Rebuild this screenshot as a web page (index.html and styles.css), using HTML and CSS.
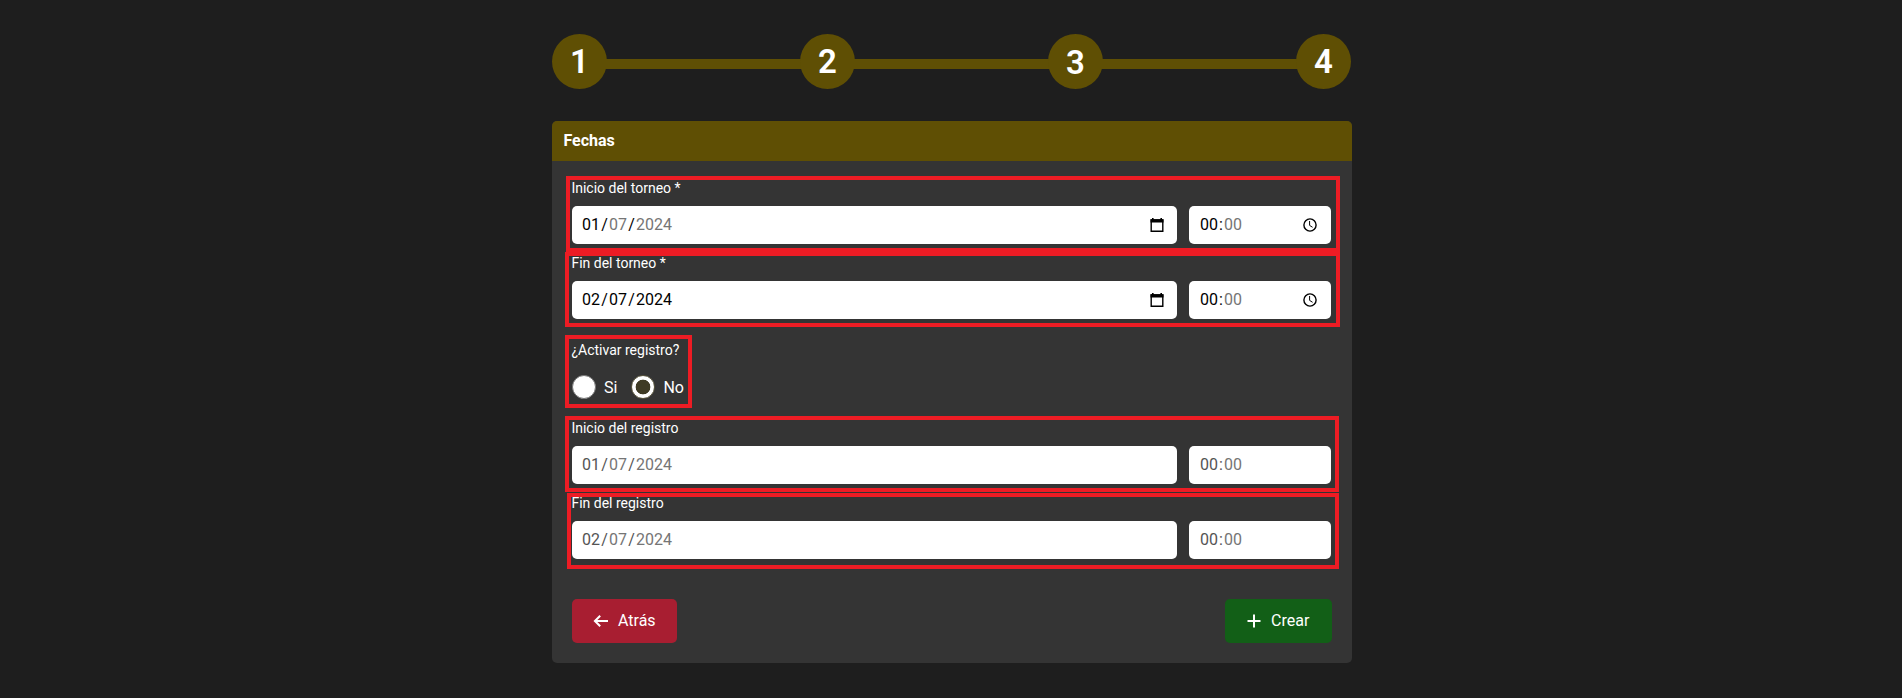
FILE: index.html
```
<!DOCTYPE html>
<html lang="es">
<head>
<meta charset="utf-8">
<title>Fechas</title>
<link rel="stylesheet" href="styles.css">
</head>
<body>
<main class="wizard">
  <ol class="steps">
    <li class="step"><span>1</span></li>
    <li class="line"></li>
    <li class="step"><span>2</span></li>
    <li class="line"></li>
    <li class="step step-three"><span>3</span></li>
    <li class="line"></li>
    <li class="step"><span>4</span></li>
  </ol>
  <section class="card">
    <h1 class="card-header">Fechas</h1>
    <form class="card-body">
      <div class="field mark mark-start">
        <label class="label">Inicio del torneo *</label>
        <div class="inputs">
          <div class="input date"><span class="value"><span class="d">01</span><span class="s">/</span><span class="d muted">07</span><span class="s">/</span><span class="y muted">2024</span></span>
            <svg class="icon" viewBox="0 0 16 16"><path d="M2.2 3h11.6v11.3H2.2z" fill="none" stroke="#000" stroke-width="1.4"/><path d="M1.5 2.3h13v3.2h-13zM3 1h1.6v2H3zM11.4 1H13v2h-1.6z"/></svg></div>
          <div class="input time"><span class="value"><span class="d">00</span><span class="c">:</span><span class="d muted">00</span></span>
            <svg class="icon" viewBox="0 0 16 16"><g fill="none" stroke="#000"><circle cx="8" cy="8" r="6.1" stroke-width="1.4"/><path d="M7.6 4v4.4l3 1.9" stroke-width="1"/></g></svg></div>
        </div>
      </div>
      <div class="field mark mark-end">
        <label class="label">Fin del torneo *</label>
        <div class="inputs">
          <div class="input date"><span class="value"><span class="d">02</span><span class="s">/</span><span class="d">07</span><span class="s">/</span><span class="y">2024</span></span>
            <svg class="icon" viewBox="0 0 16 16"><path d="M2.2 3h11.6v11.3H2.2z" fill="none" stroke="#000" stroke-width="1.4"/><path d="M1.5 2.3h13v3.2h-13zM3 1h1.6v2H3zM11.4 1H13v2h-1.6z"/></svg></div>
          <div class="input time"><span class="value"><span class="d">00</span><span class="c">:</span><span class="d muted">00</span></span>
            <svg class="icon" viewBox="0 0 16 16"><g fill="none" stroke="#000"><circle cx="8" cy="8" r="6.1" stroke-width="1.4"/><path d="M7.6 4v4.4l3 1.9" stroke-width="1"/></g></svg></div>
        </div>
      </div>
      <div class="field toggle mark mark-toggle">
        <label class="label">¿Activar registro?</label>
        <div class="radios">
          <span class="radio"></span><span class="radio-text">Si</span>
          <span class="radio checked"></span><span class="radio-text">No</span>
        </div>
      </div>
      <div class="field mark mark-reg-start">
        <label class="label">Inicio del registro</label>
        <div class="inputs disabled">
          <div class="input date"><span class="value"><span class="d">01</span><span class="s">/</span><span class="d muted">07</span><span class="s">/</span><span class="y muted">2024</span></span></div>
          <div class="input time"><span class="value"><span class="d">00</span><span class="c">:</span><span class="d muted">00</span></span></div>
        </div>
      </div>
      <div class="field mark mark-reg-end">
        <label class="label">Fin del registro</label>
        <div class="inputs disabled">
          <div class="input date"><span class="value"><span class="d">02</span><span class="s">/</span><span class="d muted">07</span><span class="s">/</span><span class="y muted">2024</span></span></div>
          <div class="input time"><span class="value"><span class="d">00</span><span class="c">:</span><span class="d muted">00</span></span></div>
        </div>
      </div>
      <div class="actions">
        <button type="button" class="btn back"><svg class="btn-icon" viewBox="0 0 16 16"><path d="M15 8H2.2M7.2 2.7L1.9 8l5.3 5.3" fill="none" stroke="#fff" stroke-width="2"/></svg><span class="btn-text">Atrás</span></button>
        <button type="button" class="btn create"><svg class="btn-icon" viewBox="0 0 16 16"><path d="M8 1.5v13M1.5 8h13" fill="none" stroke="#fff" stroke-width="2"/></svg><span class="btn-text">Crear</span></button>
      </div>
    </form>
  </section>
</main>
</body>
</html>
```
FILE: styles.css
```
*, *::after { box-sizing: border-box; }
body {
  margin: 0;
  min-height: 698px;
  background: #1e1e1e;
  color: #fff;
  font-family: Roboto, "Liberation Sans", sans-serif;
}
.wizard { width: 800px; margin-left: 552px; padding-top: 34px; }
.steps {
  display: flex;
  width: 799px;
  height: 55px;
  margin: 0 0 32px;
  padding: 0;
  list-style: none;
}
.step {
  display: flex;
  align-items: center;
  justify-content: center;
  flex: none;
  width: 55px;
  height: 55px;
  border-radius: 50%;
  background: #5f4f04;
  font-size: 33px;
  font-weight: 600;
  line-height: 38px;
}
.step-three { padding-top: 2px; }
.line {
  flex: 1;
  height: 10px;
  margin: 25px -2px 0;
  background: #5f4f04;
}
.card { height: 542px; border-radius: 5px; background: #343434; overflow: hidden; }
.card-header {
  margin: 0;
  height: 40px;
  padding-left: 11.5px;
  background: #5f4f04;
  font-size: 16px;
  font-weight: 700;
  line-height: 39px;
}
.card-body { display: flex; flex-direction: column; padding: 16px 20px 0; }
.field { height: 67px; margin-bottom: 8px; }
.label { display: block; margin: 0 0 7px -0.6px; font-size: 14px; line-height: 22px; }
.inputs { display: flex; gap: 12px; }
.input {
  display: flex;
  align-items: center;
  justify-content: space-between;
  height: 38px;
  padding: 0 11px;
  border-radius: 5px;
  background: #fff;
  color: #000;
  font-size: 16px;
}
.date { width: 605px; padding: 0 12px 0 10px; }
.time { width: 142px; padding-right: 13px; }
.value { display: flex; line-height: 24px; }
.d { width: 18px; }
.s { width: 9px; text-align: center; }
.c { width: 6px; text-align: center; }
.muted { color: #757575; }
.disabled .value { color: #545454; }
.disabled .muted { color: #757575; }
.icon { width: 16px; height: 16px; }
.toggle { margin: 12px 0 11px; }
.toggle .label { margin-bottom: 2px; }
.radios { display: flex; align-items: center; height: 48px; }
.radio { width: 24px; height: 24px; border: 1px solid #767676; border-radius: 50%; background: #fff; }
.radio.checked { margin-left: 14px; border: 1px solid #5b573f; background: radial-gradient(circle, #3f3b25 7px, #fff 7.7px); }
.radio-text { margin-left: 8px; font-size: 16px; }
.mark { position: relative; }
.mark::after { content: ""; position: absolute; border: 4px solid #ed1c24; pointer-events: none; }
.mark-start::after { inset: -1px -8px -8px -6px; }
.mark-end::after { inset: 0 -8px -8px -7px; }
.mark-toggle::after { width: 127px; height: 73px; left: -7px; top: -4px; }
.mark-reg-start::after { inset: -1px -7px -8px -7px; }
.mark-reg-end::after { inset: 1px -7px -10px -5px; }
.actions { display: flex; justify-content: space-between; margin-top: 32px; }
.btn {
  display: flex;
  align-items: center;
  height: 44px;
  padding: 0 0 0 21px;
  border: 0;
  border-radius: 5px;
  color: #fff;
  font-family: inherit;
  font-size: 16px;
}
.btn-icon { width: 16px; height: 16px; margin-right: 9px; }
.back .btn-icon { margin-top: -1px; }
.btn-text { padding-bottom: 2px; }
.back { width: 105px; background: #a81e31; }
.create { width: 107px; background: #125f17; }
```
